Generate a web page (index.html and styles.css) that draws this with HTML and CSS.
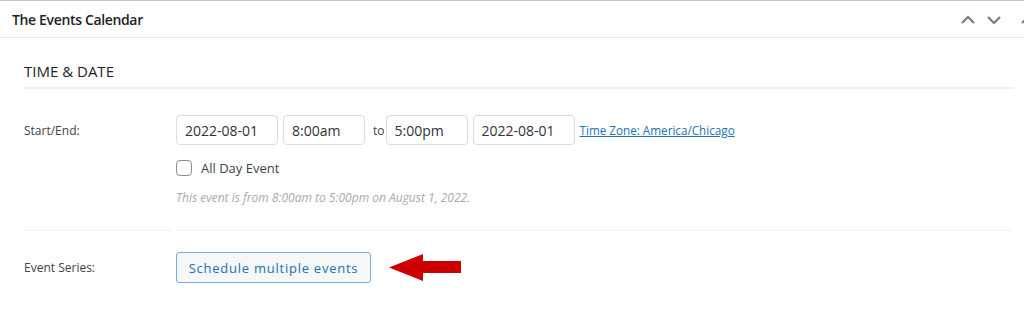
FILE: index.html
```html
<!DOCTYPE html>
<html>
<head>
<meta charset="utf-8">
<link rel="stylesheet" href="styles.css">
</head>
<body>
<div class="postbox">
  <div class="postbox-header">
    <h2 class="postbox-title">The Events Calendar</h2>
    <div class="handle-actions">
      <span class="handle-btn"><svg width="16" height="10" viewBox="0 0 16 10"><path d="M2 8 L8 2 L14 8" fill="none" stroke="#787c82" stroke-width="2.2"/></svg></span>
      <span class="handle-btn"><svg width="16" height="10" viewBox="0 0 16 10"><path d="M2 2 L8 8 L14 2" fill="none" stroke="#787c82" stroke-width="2.2"/></svg></span>
      <span class="handle-btn handle-toggle"><svg width="16" height="10" viewBox="0 0 16 10"><path d="M2 8 L8 2 L14 8" fill="none" stroke="#787c82" stroke-width="2.2"/></svg></span>
    </div>
  </div>
  <div class="inside">
    <h3 class="section-title">TIME &amp; DATE</h3>
    <div class="row row-dates">
      <div class="label">Start/End:</div>
      <div class="field">
        <div class="date-line">
          <span class="input w-date">2022-08-01</span>
          <span class="input w-time1">8:00am</span>
          <span class="to">to</span>
          <span class="input w-time2">5:00pm</span>
          <span class="input w-date2">2022-08-01</span>
          <a class="tz-link" href="#">Time Zone: America/Chicago</a>
        </div>
        <label class="allday"><span class="checkbox"></span>All Day Event</label>
        <p class="help">This event is from 8:00am to 5:00pm on August 1, 2022.</p>
      </div>
    </div>
    <div class="divider">
      <span class="div-left"></span>
      <span class="div-right"></span>
    </div>
    <div class="row row-series">
      <div class="label">Event Series:</div>
      <div class="field series-field">
        <button class="btn-schedule">Schedule multiple events</button>
        <svg class="arrow" width="73" height="28" viewBox="0 0 73 28"><path d="M0 13.5 L34 0 L34 7 L72 7 L72 19 L34 19 L34 27 Z" fill="#cc0000"/></svg>
      </div>
    </div>
  </div>
</div>
</body>
</html>
```
FILE: styles.css
```css
html, body {
  margin: 0;
  padding: 0;
  background: #fff;
  overflow: hidden;
}
body {
  font-family: "Open Sans", "Noto Sans", sans-serif;
  color: #3c434a;
  width: 1024px;
}
.postbox {
  width: 1060px;
  border-top: 1px solid #c3c4c7;
  background: #fff;
}
.postbox-header {
  height: 36px;
  display: flex;
  align-items: center;
  justify-content: space-between;
  border-bottom: 1px solid #e6e7e8;
}
.postbox-title {
  margin: 0;
  padding-left: 12px;
  font-size: 14px;
  font-weight: 600;
  color: #1d2327;
  letter-spacing: -0.35px;
}
.handle-actions {
  display: flex;
  gap: 10px;
  padding-right: 24px;
  padding-top: 1px;
}
.handle-btn {
  display: flex;
  width: 16px;
  height: 10px;
}
.handle-toggle {
  margin-left: 8px;
}
.inside {
  padding: 0 10px 0 24px;
  width: 990px;
}
.section-title {
  margin: 0;
  padding: 23px 0 6px;
  font-size: 15px;
  font-weight: 400;
  color: #1d2327;
  border-bottom: 2px solid #f0f0f1;
  letter-spacing: 0;
}
.row {
  display: flex;
}
.label {
  width: 152px;
  font-size: 12px;
  color: #3c434a;
}
.row-dates {
  padding-top: 26px;
}
.row-dates .label {
  padding-top: 7px;
}
.field {
  flex: 1;
}
.date-line {
  display: flex;
  align-items: center;
  gap: 5px;
}
.input {
  box-sizing: border-box;
  height: 30px;
  border: 1px solid #dcdcde;
  border-radius: 4px;
  font-size: 14px;
  color: #2c3338;
  padding: 0 8px;
  display: flex;
  align-items: center;
}
.w-date { width: 102px; }
.w-time1 { width: 82px; }
.w-time2 { width: 82px; }
.w-date2 { width: 102px; }
.to {
  font-size: 12px;
  color: #3c434a;
  margin: 0 -4px 0 3px;
}
.tz-link {
  font-size: 11.7px;
  color: #2271b1;
  text-decoration: underline;
  margin-left: 0;
}
.allday {
  display: flex;
  align-items: center;
  gap: 9px;
  font-size: 13px;
  color: #3c434a;
  margin-top: 14px;
  margin-left: 0;
}
.checkbox {
  box-sizing: border-box;
  width: 16px;
  height: 16px;
  border: 1px solid #8c8f94;
  border-radius: 4px;
  background: #fff;
}
.help {
  margin: 12px 0 0;
  font-size: 12px;
  font-style: italic;
  color: #a7aaad;
}
.divider {
  display: flex;
  gap: 4px;
  margin-top: 24px;
  padding-right: 2px;
}
.div-left {
  width: 148px;
  border-top: 1px solid #f0f0f1;
}
.div-right {
  flex: 1;
  border-top: 1px solid #f0f0f1;
}
.row-series {
  padding-top: 21px;
  align-items: center;
}
.series-field {
  display: flex;
  align-items: center;
  gap: 18px;
}
.btn-schedule {
  box-sizing: border-box;
  height: 31px;
  width: 195px;
  border: 1px solid #72aee6;
  border-radius: 3px;
  background: #f6f7f7;
  color: #2271b1;
  font-family: "Open Sans", "Noto Sans", sans-serif;
  font-size: 13px;
  letter-spacing: 0.75px;
  padding: 0;
  cursor: pointer;
}
.arrow {
  display: block;
}
```
